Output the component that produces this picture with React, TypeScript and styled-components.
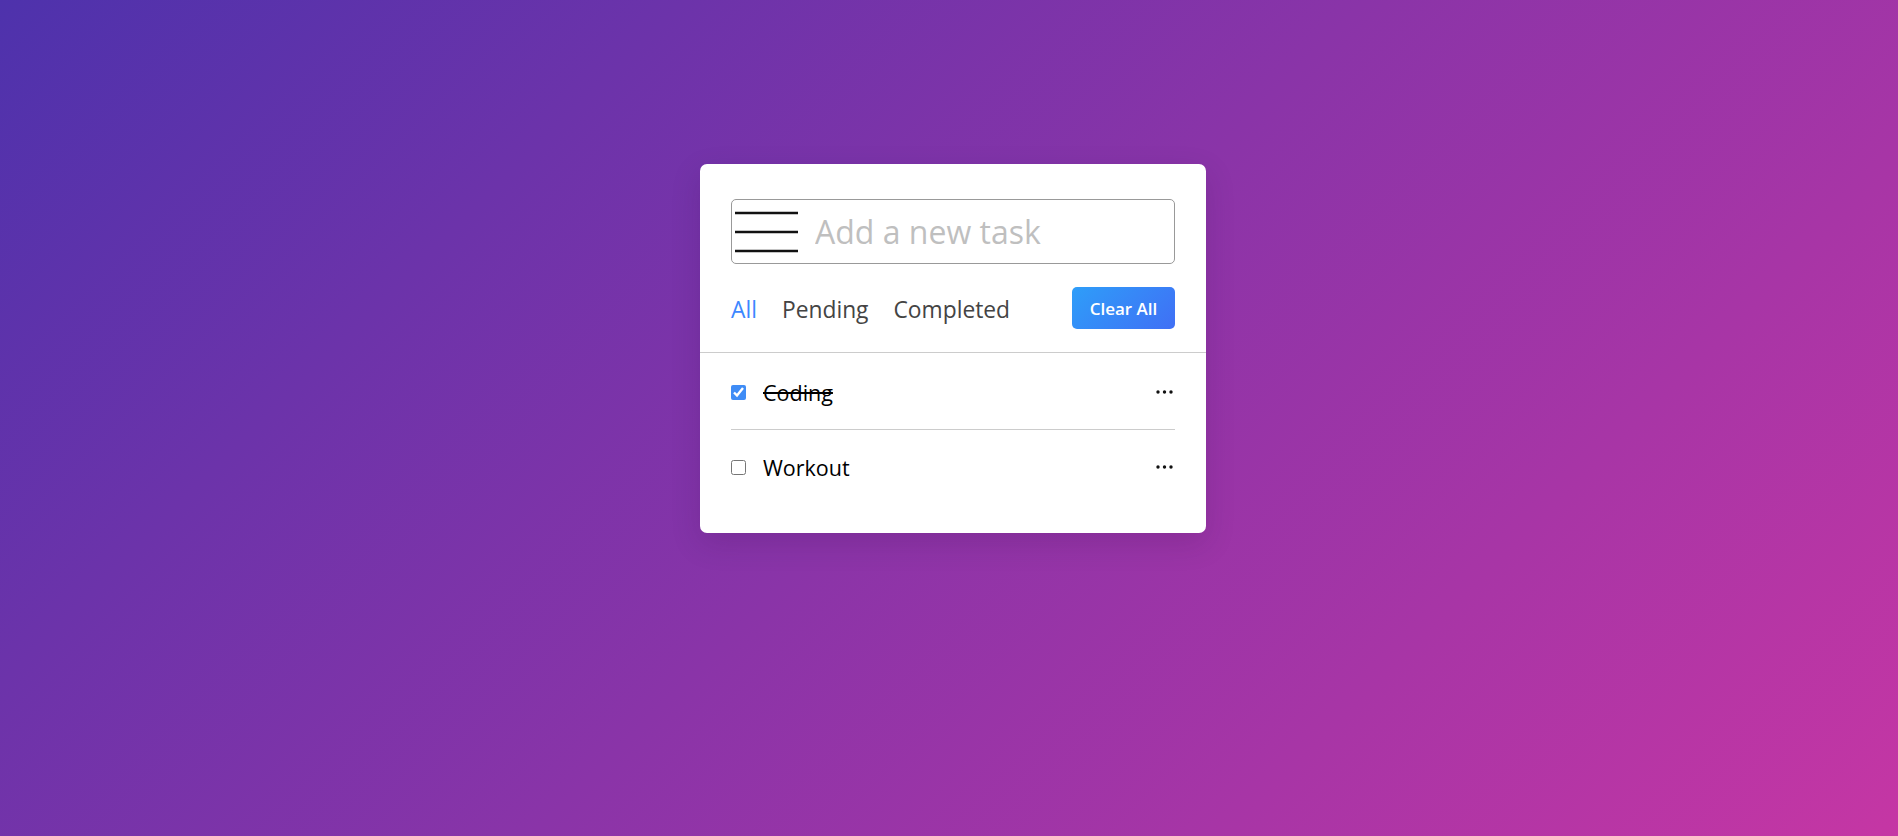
import { useState } from 'react'
import styled, { createGlobalStyle } from 'styled-components'

const GlobalStyle = createGlobalStyle`
  * {
    box-sizing: border-box;
    margin: 0;
    padding: 0;
  }

  html, body, #root {
    height: 100%;
  }

  body {
    font-family: 'Open Sans', 'Noto Sans', sans-serif;
    background: linear-gradient(135deg, #4e32ac 0%, #8a34a8 50%, #c536a4 100%);
    overflow: hidden;
  }
`

const Page = styled.div`
  height: 100%;
  display: flex;
  justify-content: center;
  align-items: flex-start;
  padding: 164px 0 0 8px;
`

const Card = styled.div`
  width: 506px;
  background: #fff;
  border-radius: 7px;
  box-shadow: 0 10px 30px rgba(40, 0, 60, 0.15);
`

const InputWrap = styled.div`
  margin: 35px 31px 0;
  height: 65px;
  border: 1px solid #999;
  border-radius: 5px;
  display: flex;
  align-items: center;
  padding-left: 3px;
  gap: 17px;
`

const TaskInput = styled.input`
  flex: 1;
  min-width: 0;
  border: none;
  outline: none;
  background: transparent;
  font-family: inherit;
  font-size: 32px;
  color: #333;

  &::placeholder {
    color: #bfbfbf;
  }
`

const Controls = styled.div`
  display: flex;
  align-items: center;
  justify-content: space-between;
  padding: 23px 31px 23px;
  border-bottom: 1px solid #ccc;
`

const Filters = styled.div`
  display: flex;
  gap: 25px;
  padding-top: 2px;
`

const Filter = styled.span<{ $active?: boolean }>`
  font-size: 22.8px;
  color: ${(p) => (p.$active ? '#3c87ff' : '#444')};
  cursor: pointer;
`

const ClearButton = styled.button`
  width: 103px;
  height: 42px;
  border: none;
  border-radius: 5px;
  background: linear-gradient(135deg, #2e9ef9 0%, #406ff5 100%);
  color: #fff;
  font-family: inherit;
  font-size: 17px;
  font-weight: 600;
  cursor: pointer;
`

const TaskList = styled.ul`
  list-style: none;
  padding: 2px 31px 29px;
`

const TaskRow = styled.li`
  height: 75px;
  display: flex;
  align-items: center;
  border-bottom: 1px solid #ccc;

  &:last-child {
    border-bottom: none;
    height: 74px;
  }
`

const Check = styled.input`
  width: 15px;
  height: 15px;
  margin-right: 17px;
  accent-color: #3f8cf6;
`

const TaskName = styled.span<{ $done?: boolean }>`
  flex: 1;
  font-size: 21.5px;
  color: #000;
  text-decoration: ${(p) => (p.$done ? 'line-through' : 'none')};
`

const MoreButton = styled.span`
  display: flex;
  align-items: center;
  cursor: pointer;
  padding-right: 2px;
`

function Bars() {
  return (
    <svg width="63" height="44" viewBox="0 0 63 44">
      <g stroke="#111" strokeWidth="2.6">
        <line x1="0" y1="3" x2="63" y2="3" />
        <line x1="0" y1="22" x2="63" y2="22" />
        <line x1="0" y1="41" x2="63" y2="41" />
      </g>
    </svg>
  )
}

function Dots() {
  return (
    <svg width="17" height="4" viewBox="0 0 17 4">
      <circle cx="2" cy="2" r="1.7" fill="#111" />
      <circle cx="8.5" cy="2" r="1.7" fill="#111" />
      <circle cx="15" cy="2" r="1.7" fill="#111" />
    </svg>
  )
}

const initialTasks = [
  { name: 'Coding', done: true },
  { name: 'Workout', done: false },
]

export default function App() {
  const [tasks, setTasks] = useState(initialTasks)

  const toggle = (i: number) =>
    setTasks((list) => list.map((t, j) => (j === i ? { ...t, done: !t.done } : t)))

  return (
    <>
      <GlobalStyle />
      <Page>
        <Card>
          <InputWrap>
            <Bars />
            <TaskInput placeholder="Add a new task" />
          </InputWrap>
          <Controls>
            <Filters>
              <Filter $active>All</Filter>
              <Filter>Pending</Filter>
              <Filter>Completed</Filter>
            </Filters>
            <ClearButton>Clear All</ClearButton>
          </Controls>
          <TaskList>
            {tasks.map((t, i) => (
              <TaskRow key={t.name}>
                <Check type="checkbox" checked={t.done} onChange={() => toggle(i)} />
                <TaskName $done={t.done}>{t.name}</TaskName>
                <MoreButton>
                  <Dots />
                </MoreButton>
              </TaskRow>
            ))}
          </TaskList>
        </Card>
      </Page>
    </>
  )
}
